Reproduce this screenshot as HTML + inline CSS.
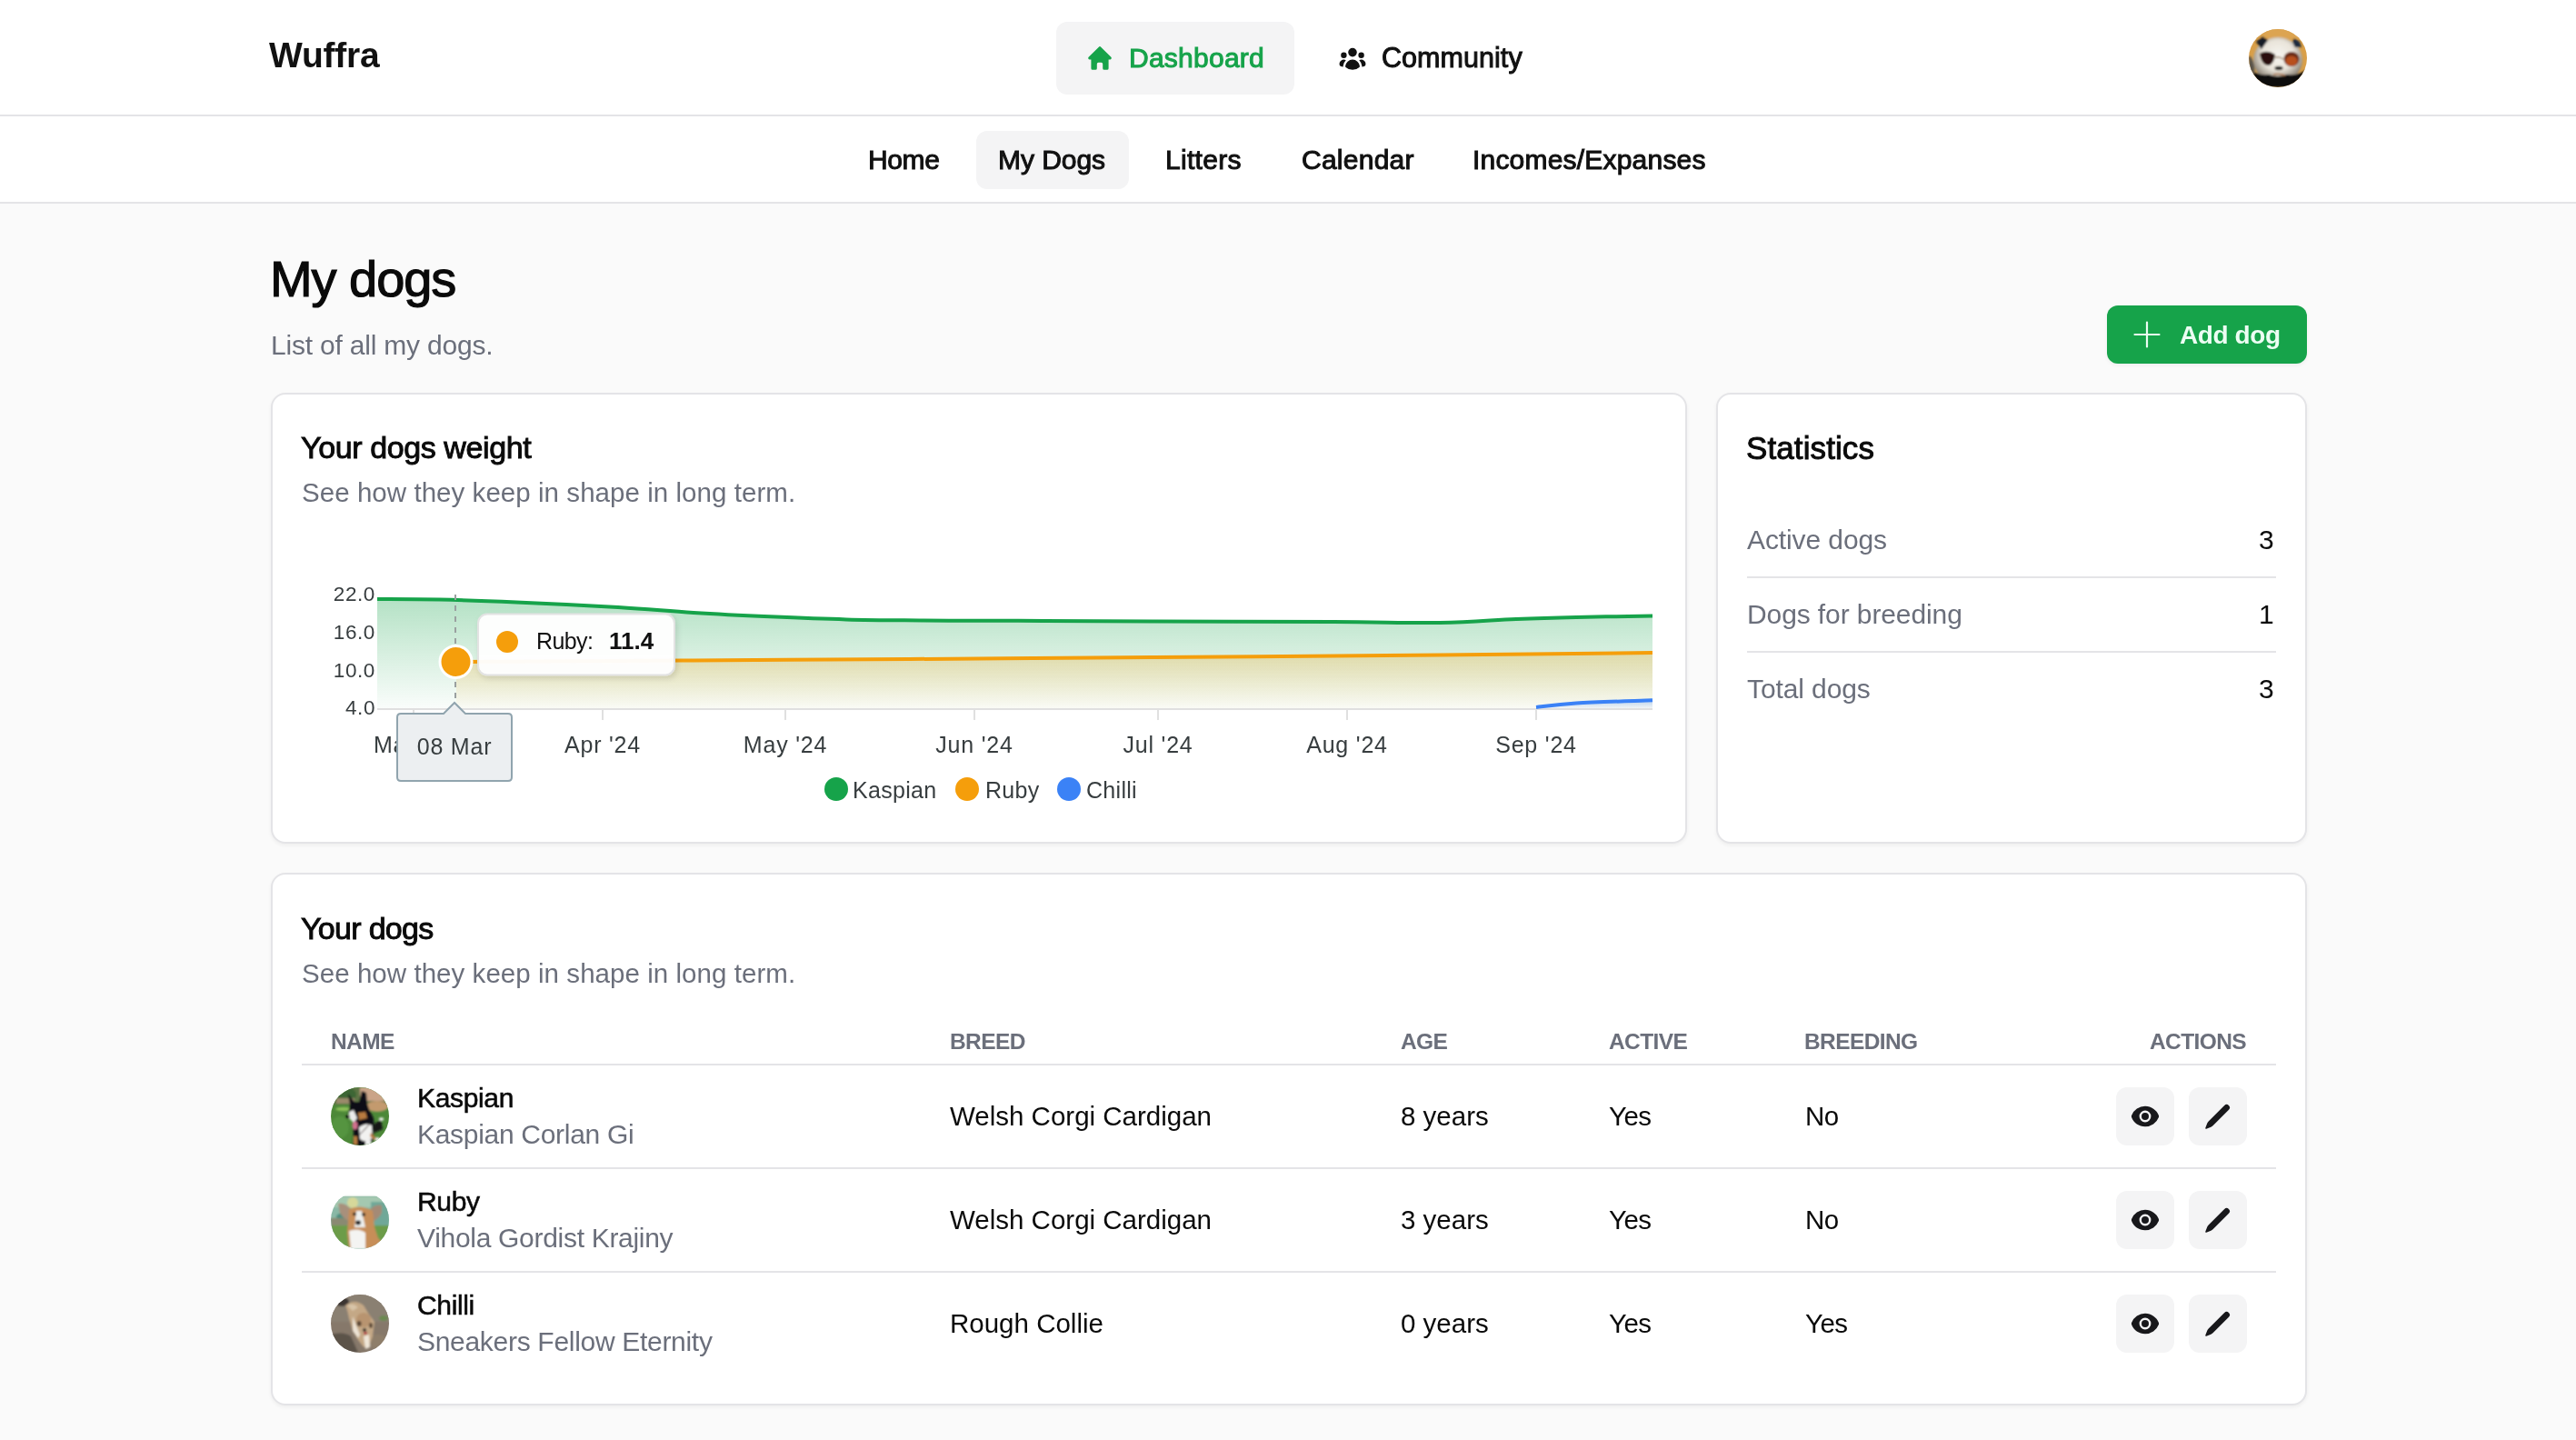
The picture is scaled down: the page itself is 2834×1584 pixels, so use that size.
<!DOCTYPE html>
<html><head><meta charset="utf-8"><title>Wuffra - My dogs</title>
<style>
html,body{margin:0;padding:0;}
body{width:2834px;height:1584px;position:relative;overflow:hidden;background:#fafafa;font-family:"Liberation Sans", sans-serif;}
.t{position:absolute;white-space:nowrap;will-change:transform;}
</style></head><body>
<div style="position:absolute;left:0px;top:0px;width:2834px;height:126px;background:#fff"></div><div style="position:absolute;left:0px;top:126px;width:2834px;height:2px;background:#e4e4e7"></div><div style="position:absolute;left:0px;top:128px;width:2834px;height:94px;background:#fff"></div><div style="position:absolute;left:0px;top:222px;width:2834px;height:2px;background:#e4e4e7"></div><div class="t" style="left:296.0px;top:41.0px;font-size:39px;line-height:39px;font-weight:700;color:#111;letter-spacing:-0.2px;font-family:'Liberation Sans', sans-serif;">Wuffra</div><div style="position:absolute;left:1162px;top:24px;width:262px;height:80px;background:#f4f4f5;border-radius:12px"></div><svg style="position:absolute;left:1194px;top:48px" width="32" height="32" viewBox="0 0 20 20"><path fill="#16a34a" fill-rule="evenodd" clip-rule="evenodd" d="M9.293 2.293a1 1 0 011.414 0l7 7A1 1 0 0117 11h-1v6a1 1 0 01-1 1h-2a1 1 0 01-1-1v-3a1 1 0 00-1-1H9a1 1 0 00-1 1v3a1 1 0 01-1 1H5a1 1 0 01-1-1v-6H3a1 1 0 01-.707-1.707l7-7z"/></svg><div class="t" style="left:1242.0px;top:49.0px;font-size:30px;line-height:30px;font-weight:400;color:#16a34a;letter-spacing:0.25px;font-family:'Liberation Sans', sans-serif;-webkit-text-stroke:1.0px #16a34a;">Dashboard</div><svg style="position:absolute;left:1472px;top:48px" width="32" height="32" viewBox="0 0 20 20"><path fill="#111" d="M10 9a3 3 0 100-6 3 3 0 000 6zM6 8a2 2 0 11-4 0 2 2 0 014 0zM1.49 15.326a.78.78 0 01-.358-.442 3 3 0 014.308-3.516 6.484 6.484 0 00-1.905 3.959c-.023.222-.014.442.025.654a4.970 4.970 0 01-2.070-.655zM16.440 15.980a4.970 4.970 0 002.070-.654.780.780 0 00.357-.442 3 3 0 00-4.308-3.517 6.484 6.484 0 011.907 3.960 2.320 2.320 0 01-.026.654zM18 8a2 2 0 11-4 0 2 2 0 014 0zM5.304 16.190a.844.844 0 01-.277-.710 5 5 0 019.947 0 .843.843 0 01-.277.710A6.975 6.975 0 0110 18a6.974 6.974 0 01-4.696-1.810z"/></svg><div class="t" style="left:1520.0px;top:48.4px;font-size:30.5px;line-height:30.5px;font-weight:400;color:#111;letter-spacing:0.05px;font-family:'Liberation Sans', sans-serif;-webkit-text-stroke:1.0px #111;">Community</div><svg style="position:absolute;left:2474px;top:32px" width="64" height="64" viewBox="0 0 64 64"><defs><clipPath id="cav"><circle cx="32" cy="32" r="32"/></clipPath>
<filter id="bl0" x="-20%" y="-20%" width="140%" height="140%"><feGaussianBlur stdDeviation="1.0"/></filter>
<radialGradient id="pface" cx="0.5" cy="0.4" r="0.55"><stop offset="0" stop-color="#f6f4ef"/><stop offset="0.6" stop-color="#e9e4da"/><stop offset="1" stop-color="#8c8478"/></radialGradient></defs>
<g clip-path="url(#cav)"><rect width="64" height="64" fill="#d99f48"/>
<g filter="url(#bl0)">
<rect x="0" y="0" width="64" height="10" fill="#dca451"/>
<ellipse cx="32" cy="34" rx="27" ry="25" fill="url(#pface)"/>
<path d="M8 14 L15 8 L21 12 L14 22 Z" fill="#141a28"/>
<path d="M50 10 L56 14 L58 20 L51 20 L48 14 Z" fill="#1e2a3e"/>
<path d="M0 44 Q12 52 22 50 Q32 54 42 50 Q54 52 64 44 L64 64 L0 64 Z" fill="#0c0a08"/>
<path d="M2 30 Q8 40 6 50 L0 50 L0 30 Z" fill="#5a544c"/>
<path d="M12 27 Q20 22 29 28 Q28 38 22 40 Q14 40 12 27 Z" fill="#2a100a"/>
<ellipse cx="47" cy="33" rx="8.5" ry="8" fill="#6a2a12"/>
<ellipse cx="47" cy="35" rx="6.5" ry="5.5" fill="#b8501e"/>
<path d="M29 31 Q34 30 38 33" stroke="#6a4a28" stroke-width="1" fill="none"/>
<ellipse cx="33" cy="43" rx="4.5" ry="2.2" fill="#151515"/>
<path d="M27 50 Q33 48 40 51" stroke="#b07a50" stroke-width="1.6" fill="none"/>
</g></g></svg><div style="position:absolute;left:1074px;top:144px;width:168px;height:64px;background:#f4f4f5;border-radius:12px"></div><div class="t" style="left:955.0px;top:160.7px;font-size:30px;line-height:30px;font-weight:400;color:#111;letter-spacing:-0.4px;font-family:'Liberation Sans', sans-serif;-webkit-text-stroke:1.0px #111;">Home</div><div class="t" style="left:1098.0px;top:160.7px;font-size:30px;line-height:30px;font-weight:400;color:#111;letter-spacing:-0.05px;font-family:'Liberation Sans', sans-serif;-webkit-text-stroke:1.0px #111;">My Dogs</div><div class="t" style="left:1282.0px;top:160.7px;font-size:30px;line-height:30px;font-weight:400;color:#111;letter-spacing:0.3px;font-family:'Liberation Sans', sans-serif;-webkit-text-stroke:1.0px #111;">Litters</div><div class="t" style="left:1432.0px;top:160.7px;font-size:30px;line-height:30px;font-weight:400;color:#111;letter-spacing:0.25px;font-family:'Liberation Sans', sans-serif;-webkit-text-stroke:1.0px #111;">Calendar</div><div class="t" style="left:1620.0px;top:160.7px;font-size:30px;line-height:30px;font-weight:400;color:#111;letter-spacing:0.2px;font-family:'Liberation Sans', sans-serif;-webkit-text-stroke:1.0px #111;">Incomes/Expanses</div><div style="position:absolute;left:0px;top:224px;width:2834px;height:1360px;background:#fafafa"></div><div class="t" style="left:297.0px;top:278.6px;font-size:56px;line-height:56px;font-weight:400;color:#0a0a0a;letter-spacing:-1.05px;font-family:'Liberation Sans', sans-serif;-webkit-text-stroke:1.2px #0a0a0a;">My dogs</div><div class="t" style="left:298.0px;top:364.6px;font-size:30px;line-height:30px;font-weight:400;color:#6b6f7b;letter-spacing:-0.2px;font-family:'Liberation Sans', sans-serif;">List of all my dogs.</div><div style="position:absolute;left:2318px;top:336px;width:220px;height:64px;background:#16a34a;border-radius:12px;box-shadow:0 2px 4px rgba(0,0,0,0.05)"></div><svg style="position:absolute;left:2347px;top:353px" width="30" height="30" viewBox="0 0 30 30">
<path d="M15 1.5 V28.5 M1.5 15 H28.5" stroke="#ecfdf3" stroke-width="2.2" stroke-linecap="round"/></svg><div class="t" style="left:2398.0px;top:354.6px;font-size:28px;line-height:28px;font-weight:700;color:#ecfdf3;letter-spacing:-0.4px;font-family:'Liberation Sans', sans-serif;">Add dog</div><div style="position:absolute;left:298px;top:432px;width:1558px;height:496px;background:#fff;border:2px solid #e4e4e7;border-radius:16px;box-shadow:0 2px 4px rgba(0,0,0,0.05);box-sizing:border-box"></div><div style="position:absolute;left:1888px;top:432px;width:650px;height:496px;background:#fff;border:2px solid #e4e4e7;border-radius:16px;box-shadow:0 2px 4px rgba(0,0,0,0.05);box-sizing:border-box"></div><div style="position:absolute;left:298px;top:960px;width:2240px;height:586px;background:#fff;border:2px solid #e4e4e7;border-radius:16px;box-shadow:0 2px 4px rgba(0,0,0,0.05);box-sizing:border-box"></div><div class="t" style="left:331.0px;top:475.2px;font-size:34px;line-height:34px;font-weight:400;color:#0a0a0a;letter-spacing:-0.4px;font-family:'Liberation Sans', sans-serif;-webkit-text-stroke:0.95px #0a0a0a;">Your dogs weight</div><div class="t" style="left:332.0px;top:527.0px;font-size:29.5px;line-height:29.5px;font-weight:400;color:#6b6f7b;letter-spacing:0.05px;font-family:'Liberation Sans', sans-serif;">See how they keep in shape in long term.</div><div class="t" style="left:1921.0px;top:474.8px;font-size:35px;line-height:35px;font-weight:400;color:#0a0a0a;letter-spacing:0.1px;font-family:'Liberation Sans', sans-serif;-webkit-text-stroke:0.95px #0a0a0a;">Statistics</div><div class="t" style="left:1922.0px;top:578.9px;font-size:30px;line-height:30px;font-weight:400;color:#6b6f7b;letter-spacing:-0.1px;font-family:'Liberation Sans', sans-serif;">Active dogs</div><div class="t" style="right:332.0px;top:578.9px;font-size:30px;line-height:30px;font-weight:400;color:#0a0a0a;letter-spacing:0px;font-family:'Liberation Sans', sans-serif;">3</div><div class="t" style="left:1922.0px;top:660.7px;font-size:30px;line-height:30px;font-weight:400;color:#6b6f7b;letter-spacing:-0.1px;font-family:'Liberation Sans', sans-serif;">Dogs for breeding</div><div class="t" style="right:332.0px;top:660.7px;font-size:30px;line-height:30px;font-weight:400;color:#0a0a0a;letter-spacing:0px;font-family:'Liberation Sans', sans-serif;">1</div><div class="t" style="left:1922.0px;top:742.7px;font-size:30px;line-height:30px;font-weight:400;color:#6b6f7b;letter-spacing:-0.1px;font-family:'Liberation Sans', sans-serif;">Total dogs</div><div class="t" style="right:332.0px;top:742.7px;font-size:30px;line-height:30px;font-weight:400;color:#0a0a0a;letter-spacing:0px;font-family:'Liberation Sans', sans-serif;">3</div><div style="position:absolute;left:1922px;top:634px;width:582px;height:2px;background:#e4e4e7"></div><div style="position:absolute;left:1922px;top:716px;width:582px;height:2px;background:#e4e4e7"></div><div class="t" style="left:331.0px;top:1003.8px;font-size:34px;line-height:34px;font-weight:400;color:#0a0a0a;letter-spacing:-0.7px;font-family:'Liberation Sans', sans-serif;-webkit-text-stroke:0.95px #0a0a0a;">Your dogs</div><div class="t" style="left:332.0px;top:1056.4px;font-size:29.5px;line-height:29.5px;font-weight:400;color:#6b6f7b;letter-spacing:0.05px;font-family:'Liberation Sans', sans-serif;">See how they keep in shape in long term.</div><div class="t" style="left:364.0px;top:1133.6px;font-size:24.5px;line-height:24.5px;font-weight:700;color:#6b6f7b;letter-spacing:-0.6px;font-family:'Liberation Sans', sans-serif;">NAME</div><div class="t" style="left:1045.0px;top:1133.6px;font-size:24.5px;line-height:24.5px;font-weight:700;color:#6b6f7b;letter-spacing:-0.6px;font-family:'Liberation Sans', sans-serif;">BREED</div><div class="t" style="left:1541.0px;top:1133.6px;font-size:24.5px;line-height:24.5px;font-weight:700;color:#6b6f7b;letter-spacing:-0.6px;font-family:'Liberation Sans', sans-serif;">AGE</div><div class="t" style="left:1770.0px;top:1133.6px;font-size:24.5px;line-height:24.5px;font-weight:700;color:#6b6f7b;letter-spacing:-0.6px;font-family:'Liberation Sans', sans-serif;">ACTIVE</div><div class="t" style="left:1985.0px;top:1133.6px;font-size:24.5px;line-height:24.5px;font-weight:700;color:#6b6f7b;letter-spacing:-0.6px;font-family:'Liberation Sans', sans-serif;">BREEDING</div><div class="t" style="right:363.0px;top:1133.6px;font-size:24.5px;line-height:24.5px;font-weight:700;color:#6b6f7b;letter-spacing:-0.6px;font-family:'Liberation Sans', sans-serif;">ACTIONS</div><div style="position:absolute;left:332px;top:1170px;width:2172px;height:2px;background:#e4e4e7"></div><div style="position:absolute;left:332px;top:1284px;width:2172px;height:2px;background:#e4e4e7"></div><div style="position:absolute;left:332px;top:1398px;width:2172px;height:2px;background:#e4e4e7"></div><svg style="position:absolute;left:364px;top:1196px" width="64" height="64" viewBox="0 0 64 64"><defs><clipPath id="ca1"><circle cx="32" cy="32" r="32"/></clipPath>
<filter id="bl1" x="-20%" y="-20%" width="140%" height="140%"><feGaussianBlur stdDeviation="1.0"/></filter></defs>
<g clip-path="url(#ca1)"><rect width="64" height="64" fill="#4c8838"/>
<g filter="url(#bl1)">
<rect x="0" y="0" width="64" height="19" fill="#5d7444"/>
<ellipse cx="14" cy="8" rx="14" ry="9" fill="#3e6634"/>
<rect x="32" y="0" width="32" height="15" fill="#caa488"/>
<rect x="6" y="12" width="20" height="6" fill="#9a8a6a"/>
<ellipse cx="51" cy="21" rx="12" ry="6" fill="#c39a6e"/>
<ellipse cx="14" cy="24" rx="9" ry="2.2" fill="#8cc058"/>
<ellipse cx="10" cy="44" rx="10" ry="12" fill="#559440"/>
<path d="M19 7 L26 16 L31 16 L34 4 L39 6 L40 18 L42 24 L40 34 L30 34 L21 34 L19 28 L21 20 Z" fill="#101018"/>
<path d="M28 33 L42 24 L47 34 L48 46 L46 60 L40 64 L24 64 L25 50 L24 42 Z" fill="#101018"/>
<path d="M48 40 L55 36 L57 46 L48 50 Z" fill="#121218"/>
<ellipse cx="55.5" cy="35" rx="2.8" ry="1.8" fill="#f2f2f2"/>
<path d="M20 27 L25 25 L29 34 L25 39 L20 34 Z" fill="#ececec"/>
<ellipse cx="18.5" cy="32.5" rx="2.3" ry="1.8" fill="#050505"/>
<path d="M30 28 L38 27 L40 34 L31 36 Z" fill="#b87a40"/>
<ellipse cx="26.5" cy="42" rx="3" ry="4.5" fill="#d0708e"/>
<path d="M31 44 Q39 38 45 42 L46 56 Q38 62 32 57 Z" fill="#f2f2f0"/>
<path d="M32 52 L43 40" stroke="#3a2a2a" stroke-width="1"/>
<rect x="25" y="54" width="4" height="9" fill="#b87a40"/>
<rect x="38" y="58" width="6" height="6" fill="#f0f0f0"/>
<ellipse cx="51" cy="57" rx="3" ry="2" fill="#eeeeee"/>
<path d="M44 50 L50 56 L48 58 L43 54 Z" fill="#b87a40"/>
</g></g></svg><div class="t" style="left:459.0px;top:1192.7px;font-size:30px;line-height:30px;font-weight:400;color:#0a0a0a;letter-spacing:-0.35px;font-family:'Liberation Sans', sans-serif;-webkit-text-stroke:0.55px #0a0a0a;">Kaspian</div><div class="t" style="left:459.0px;top:1232.5px;font-size:30px;line-height:30px;font-weight:400;color:#6b6f7b;letter-spacing:-0.3px;font-family:'Liberation Sans', sans-serif;">Kaspian Corlan Gi</div><div class="t" style="left:1045.0px;top:1213.0px;font-size:29.5px;line-height:29.5px;font-weight:400;color:#0a0a0a;letter-spacing:0px;font-family:'Liberation Sans', sans-serif;">Welsh Corgi Cardigan</div><div class="t" style="left:1541.0px;top:1213.0px;font-size:29.5px;line-height:29.5px;font-weight:400;color:#0a0a0a;letter-spacing:0px;font-family:'Liberation Sans', sans-serif;">8 years</div><div class="t" style="left:1770.0px;top:1213.0px;font-size:29.5px;line-height:29.5px;font-weight:400;color:#0a0a0a;letter-spacing:-0.5px;font-family:'Liberation Sans', sans-serif;">Yes</div><div class="t" style="left:1986.0px;top:1213.0px;font-size:29.5px;line-height:29.5px;font-weight:400;color:#0a0a0a;letter-spacing:-0.5px;font-family:'Liberation Sans', sans-serif;">No</div><div style="position:absolute;left:2328px;top:1196px;width:64px;height:64px;background:#f4f4f5;border-radius:12px"></div><div style="position:absolute;left:2408px;top:1196px;width:64px;height:64px;background:#f4f4f5;border-radius:12px"></div><svg style="position:absolute;left:2344px;top:1212px" width="32" height="32" viewBox="0 0 20 20"><path fill="#18181b" d="M10 12.5a2.5 2.5 0 100-5 2.5 2.5 0 000 5z"/><path fill="#18181b" fill-rule="evenodd" clip-rule="evenodd" d="M.664 10.590a1.651 1.651 0 010-1.186A10.004 10.004 0 0110 3c4.257 0 7.893 2.660 9.336 6.410.147.381.146.804 0 1.186A10.004 10.004 0 0110 17c-4.257 0-7.893-2.660-9.336-6.410zM14 10a4 4 0 11-8 0 4 4 0 018 0z"/></svg><svg style="position:absolute;left:2424px;top:1212px" width="32" height="32" viewBox="0 0 20 20"><path fill="#18181b" d="M2.695 14.763l-1.262 3.154a.5.5 0 00.650.650l3.155-1.262a4 4 0 001.343-.885L17.500 5.500a2.121 2.121 0 00-3-3L3.580 13.420a4 4 0 00-.885 1.343z"/></svg><svg style="position:absolute;left:364px;top:1310px" width="64" height="64" viewBox="0 0 64 64"><defs><clipPath id="ca2"><circle cx="32" cy="32" r="32"/></clipPath>
<filter id="bl2" x="-20%" y="-20%" width="140%" height="140%"><feGaussianBlur stdDeviation="1.0"/></filter></defs>
<g clip-path="url(#ca2)"><rect width="64" height="64" fill="#ffffff"/>
<rect x="0" y="6" width="64" height="58" fill="#8ab8a6"/>
<g filter="url(#bl2)">
<rect x="0" y="6" width="64" height="12" fill="#a4c8b0"/>
<ellipse cx="24" cy="13" rx="6" ry="6" fill="#d6d89a"/>
<rect x="44" y="12" width="20" height="30" fill="#6fa898"/>
<path d="M6 28 Q10 22 16 26 L20 38 L8 38 Z" fill="#4e8e80"/>
<rect x="0" y="30" width="20" height="10" fill="#8a8a72"/>
<rect x="0" y="38" width="64" height="26" fill="#6c9c4a"/>
<path d="M8 14 Q16 12 24 22 L24 34 Q14 32 10 24 Z" fill="#a8907c"/>
<path d="M56 16 Q48 14 42 22 L42 36 Q52 32 56 24 Z" fill="#a48a76"/>
<path d="M20 20 Q33 14 46 22 L48 40 L52 52 L60 60 L60 64 L20 64 L18 46 Z" fill="#c78e58"/>
<path d="M28 22 L34 22 L38 40 L26 40 Z" fill="#eef0ee"/>
<path d="M20 44 Q30 40 38 46 L38 64 L22 64 Z" fill="#f4f4f2"/>
<ellipse cx="26" cy="25.5" rx="2" ry="1.8" fill="#121212"/>
<ellipse cx="36" cy="26" rx="2" ry="1.8" fill="#121212"/>
<ellipse cx="30" cy="35" rx="3" ry="2.4" fill="#0c0c10"/>
</g></g></svg><div class="t" style="left:459.0px;top:1306.7px;font-size:30px;line-height:30px;font-weight:400;color:#0a0a0a;letter-spacing:-0.35px;font-family:'Liberation Sans', sans-serif;-webkit-text-stroke:0.55px #0a0a0a;">Ruby</div><div class="t" style="left:459.0px;top:1346.5px;font-size:30px;line-height:30px;font-weight:400;color:#6b6f7b;letter-spacing:-0.3px;font-family:'Liberation Sans', sans-serif;">Vihola Gordist Krajiny</div><div class="t" style="left:1045.0px;top:1327.0px;font-size:29.5px;line-height:29.5px;font-weight:400;color:#0a0a0a;letter-spacing:0px;font-family:'Liberation Sans', sans-serif;">Welsh Corgi Cardigan</div><div class="t" style="left:1541.0px;top:1327.0px;font-size:29.5px;line-height:29.5px;font-weight:400;color:#0a0a0a;letter-spacing:0px;font-family:'Liberation Sans', sans-serif;">3 years</div><div class="t" style="left:1770.0px;top:1327.0px;font-size:29.5px;line-height:29.5px;font-weight:400;color:#0a0a0a;letter-spacing:-0.5px;font-family:'Liberation Sans', sans-serif;">Yes</div><div class="t" style="left:1986.0px;top:1327.0px;font-size:29.5px;line-height:29.5px;font-weight:400;color:#0a0a0a;letter-spacing:-0.5px;font-family:'Liberation Sans', sans-serif;">No</div><div style="position:absolute;left:2328px;top:1310px;width:64px;height:64px;background:#f4f4f5;border-radius:12px"></div><div style="position:absolute;left:2408px;top:1310px;width:64px;height:64px;background:#f4f4f5;border-radius:12px"></div><svg style="position:absolute;left:2344px;top:1326px" width="32" height="32" viewBox="0 0 20 20"><path fill="#18181b" d="M10 12.5a2.5 2.5 0 100-5 2.5 2.5 0 000 5z"/><path fill="#18181b" fill-rule="evenodd" clip-rule="evenodd" d="M.664 10.590a1.651 1.651 0 010-1.186A10.004 10.004 0 0110 3c4.257 0 7.893 2.660 9.336 6.410.147.381.146.804 0 1.186A10.004 10.004 0 0110 17c-4.257 0-7.893-2.660-9.336-6.410zM14 10a4 4 0 11-8 0 4 4 0 018 0z"/></svg><svg style="position:absolute;left:2424px;top:1326px" width="32" height="32" viewBox="0 0 20 20"><path fill="#18181b" d="M2.695 14.763l-1.262 3.154a.5.5 0 00.650.650l3.155-1.262a4 4 0 001.343-.885L17.500 5.500a2.121 2.121 0 00-3-3L3.580 13.420a4 4 0 00-.885 1.343z"/></svg><svg style="position:absolute;left:364px;top:1424px" width="64" height="64" viewBox="0 0 64 64"><defs><clipPath id="ca3"><circle cx="32" cy="32" r="32"/></clipPath>
<filter id="bl3" x="-20%" y="-20%" width="140%" height="140%"><feGaussianBlur stdDeviation="1.0"/></filter></defs>
<g clip-path="url(#ca3)"><rect width="64" height="64" fill="#86786a"/>
<g filter="url(#bl3)">
<rect x="0" y="0" width="64" height="30" fill="#8a8072"/>
<path d="M0 44 Q14 40 22 46 L30 64 L0 64 Z" fill="#5c524a"/>
<ellipse cx="52" cy="52" rx="10" ry="8" fill="#8e7e6a"/>
<ellipse cx="58" cy="26" rx="5" ry="3" fill="#6a8a50"/>
<ellipse cx="12" cy="8" rx="8" ry="5" fill="#3a3432"/>
<path d="M16 12 Q26 4 36 12 L42 22 L48 30 L46 46 L42 56 L36 58 L30 50 L24 40 L20 26 Q18 16 16 12 Z" fill="#c4a886"/>
<path d="M18 12 Q24 8 30 14 L24 18 Z" fill="#d8c4a8"/>
<ellipse cx="36" cy="28" rx="8" ry="8" fill="#b89470"/>
<path d="M24 24 Q28 34 32 44 L30 48 L24 40 Z" fill="#ece2d4"/>
<path d="M36 46 L42 44 L43 58 L38 60 Z" fill="#efe6d8"/>
<ellipse cx="31" cy="32" rx="2.5" ry="3" fill="#5a4636"/>
<ellipse cx="44" cy="34" rx="2" ry="3" fill="#5a4636"/>
<ellipse cx="37" cy="39" rx="2" ry="1.8" fill="#111"/>
<ellipse cx="38" cy="42.5" rx="2" ry="1.5" fill="#b03040"/>
</g></g></svg><div class="t" style="left:459.0px;top:1420.7px;font-size:30px;line-height:30px;font-weight:400;color:#0a0a0a;letter-spacing:-0.35px;font-family:'Liberation Sans', sans-serif;-webkit-text-stroke:0.55px #0a0a0a;">Chilli</div><div class="t" style="left:459.0px;top:1460.5px;font-size:30px;line-height:30px;font-weight:400;color:#6b6f7b;letter-spacing:-0.3px;font-family:'Liberation Sans', sans-serif;">Sneakers Fellow Eternity</div><div class="t" style="left:1045.0px;top:1441.0px;font-size:29.5px;line-height:29.5px;font-weight:400;color:#0a0a0a;letter-spacing:0px;font-family:'Liberation Sans', sans-serif;">Rough Collie</div><div class="t" style="left:1541.0px;top:1441.0px;font-size:29.5px;line-height:29.5px;font-weight:400;color:#0a0a0a;letter-spacing:0px;font-family:'Liberation Sans', sans-serif;">0 years</div><div class="t" style="left:1770.0px;top:1441.0px;font-size:29.5px;line-height:29.5px;font-weight:400;color:#0a0a0a;letter-spacing:-0.5px;font-family:'Liberation Sans', sans-serif;">Yes</div><div class="t" style="left:1986.0px;top:1441.0px;font-size:29.5px;line-height:29.5px;font-weight:400;color:#0a0a0a;letter-spacing:-0.5px;font-family:'Liberation Sans', sans-serif;">Yes</div><div style="position:absolute;left:2328px;top:1424px;width:64px;height:64px;background:#f4f4f5;border-radius:12px"></div><div style="position:absolute;left:2408px;top:1424px;width:64px;height:64px;background:#f4f4f5;border-radius:12px"></div><svg style="position:absolute;left:2344px;top:1440px" width="32" height="32" viewBox="0 0 20 20"><path fill="#18181b" d="M10 12.5a2.5 2.5 0 100-5 2.5 2.5 0 000 5z"/><path fill="#18181b" fill-rule="evenodd" clip-rule="evenodd" d="M.664 10.590a1.651 1.651 0 010-1.186A10.004 10.004 0 0110 3c4.257 0 7.893 2.660 9.336 6.410.147.381.146.804 0 1.186A10.004 10.004 0 0110 17c-4.257 0-7.893-2.660-9.336-6.410zM14 10a4 4 0 11-8 0 4 4 0 018 0z"/></svg><svg style="position:absolute;left:2424px;top:1440px" width="32" height="32" viewBox="0 0 20 20"><path fill="#18181b" d="M2.695 14.763l-1.262 3.154a.5.5 0 00.650.650l3.155-1.262a4 4 0 001.343-.885L17.500 5.500a2.121 2.121 0 00-3-3L3.580 13.420a4 4 0 00-.885 1.343z"/></svg><svg style="position:absolute;left:0;top:0" width="2834" height="1584" viewBox="0 0 2834 1584"><defs>
<linearGradient id="gg" x1="0" y1="0" x2="0" y2="1"><stop offset="0" stop-color="#16a34a" stop-opacity="0.32"/><stop offset="1" stop-color="#16a34a" stop-opacity="0.02"/></linearGradient>
<linearGradient id="og" x1="0" y1="0" x2="0" y2="1"><stop offset="0" stop-color="#f59e0b" stop-opacity="0.26"/><stop offset="1" stop-color="#f59e0b" stop-opacity="0.02"/></linearGradient>
<linearGradient id="bg" x1="0" y1="0" x2="0" y2="1"><stop offset="0" stop-color="#3b82f6" stop-opacity="0.3"/><stop offset="1" stop-color="#3b82f6" stop-opacity="0.02"/></linearGradient>
<filter id="tsh" x="-10%" y="-10%" width="130%" height="140%"><feDropShadow dx="2" dy="3" stdDeviation="3" flood-color="#000" flood-opacity="0.12"/></filter>
</defs><path d="M415.0,659.0 C427.4,659.1 456.5,659.0 484.0,659.6 C511.5,660.2 532.7,660.9 568.0,662.4 C603.3,663.9 644.9,665.9 680.0,668.0 C715.1,670.1 732.9,672.1 763.0,674.0 C793.1,675.9 816.8,677.0 847.0,678.3 C877.2,679.6 900.8,680.6 931.0,681.4 C961.2,682.2 981.0,682.2 1015.0,682.5 C1049.0,682.8 1074.6,682.6 1120.0,682.8 C1165.4,683.0 1204.5,683.3 1267.0,683.5 C1329.5,683.7 1409.9,683.7 1467.0,684.0 C1524.1,684.3 1547.8,685.5 1584.0,685.0 C1620.2,684.5 1641.0,682.1 1668.0,681.0 C1695.0,679.9 1707.0,679.6 1734.0,679.0 C1761.0,678.4 1802.9,677.8 1818.0,677.5 L1818,780 L415,780 Z" fill="url(#gg)"/><path d="M502.0,728.0 C546.6,727.7 660.4,727.0 750.0,726.5 C839.6,726.0 906.9,725.6 1000.0,725.0 C1093.1,724.4 1161.9,723.8 1267.0,723.0 C1372.1,722.2 1484.8,721.4 1584.0,720.5 C1683.2,719.6 1775.9,718.5 1818.0,718.0 L1818,780 L502,780 Z" fill="url(#og)"/><path d="M1690.0,778.0 C1697.9,777.2 1711.0,774.9 1734.0,773.5 C1757.0,772.1 1802.9,770.9 1818.0,770.3 L1818,780 L1690,780 Z" fill="url(#bg)"/><rect x="415" y="779" width="1403" height="2" fill="#e0e0e0"/><rect x="454" y="780" width="2" height="12" fill="#e0e0e0"/><rect x="662" y="780" width="2" height="12" fill="#e0e0e0"/><rect x="863" y="780" width="2" height="12" fill="#e0e0e0"/><rect x="1071" y="780" width="2" height="12" fill="#e0e0e0"/><rect x="1273" y="780" width="2" height="12" fill="#e0e0e0"/><rect x="1481" y="780" width="2" height="12" fill="#e0e0e0"/><rect x="1689" y="780" width="2" height="12" fill="#e0e0e0"/><path d="M415.0,659.0 C427.4,659.1 456.5,659.0 484.0,659.6 C511.5,660.2 532.7,660.9 568.0,662.4 C603.3,663.9 644.9,665.9 680.0,668.0 C715.1,670.1 732.9,672.1 763.0,674.0 C793.1,675.9 816.8,677.0 847.0,678.3 C877.2,679.6 900.8,680.6 931.0,681.4 C961.2,682.2 981.0,682.2 1015.0,682.5 C1049.0,682.8 1074.6,682.6 1120.0,682.8 C1165.4,683.0 1204.5,683.3 1267.0,683.5 C1329.5,683.7 1409.9,683.7 1467.0,684.0 C1524.1,684.3 1547.8,685.5 1584.0,685.0 C1620.2,684.5 1641.0,682.1 1668.0,681.0 C1695.0,679.9 1707.0,679.6 1734.0,679.0 C1761.0,678.4 1802.9,677.8 1818.0,677.5" fill="none" stroke="#16a34a" stroke-width="4" stroke-linecap="butt"/><path d="M502.0,728.0 C546.6,727.7 660.4,727.0 750.0,726.5 C839.6,726.0 906.9,725.6 1000.0,725.0 C1093.1,724.4 1161.9,723.8 1267.0,723.0 C1372.1,722.2 1484.8,721.4 1584.0,720.5 C1683.2,719.6 1775.9,718.5 1818.0,718.0" fill="none" stroke="#f59e0b" stroke-width="4"/><path d="M1690.0,778.0 C1697.9,777.2 1711.0,774.9 1734.0,773.5 C1757.0,772.1 1802.9,770.9 1818.0,770.3" fill="none" stroke="#3b82f6" stroke-width="4"/><line x1="501" y1="654" x2="501" y2="770" stroke="#9aa0a0" stroke-width="2" stroke-dasharray="6,6"/><text x="413" y="661" text-anchor="end" font-family="Liberation Sans, sans-serif" font-size="22.5" fill="#373d3f" letter-spacing="0.6">22.0</text><text x="413" y="702.6" text-anchor="end" font-family="Liberation Sans, sans-serif" font-size="22.5" fill="#373d3f" letter-spacing="0.6">16.0</text><text x="413" y="744.5" text-anchor="end" font-family="Liberation Sans, sans-serif" font-size="22.5" fill="#373d3f" letter-spacing="0.6">10.0</text><text x="413" y="786.4" text-anchor="end" font-family="Liberation Sans, sans-serif" font-size="22.5" fill="#373d3f" letter-spacing="0.6">4.0</text><text x="455" y="828.3" text-anchor="middle" font-family="Liberation Sans, sans-serif" font-size="25" fill="#373d3f" letter-spacing="0.8">Mar '24</text><text x="663" y="828.3" text-anchor="middle" font-family="Liberation Sans, sans-serif" font-size="25" fill="#373d3f" letter-spacing="0.8">Apr '24</text><text x="864" y="828.3" text-anchor="middle" font-family="Liberation Sans, sans-serif" font-size="25" fill="#373d3f" letter-spacing="0.8">May '24</text><text x="1072" y="828.3" text-anchor="middle" font-family="Liberation Sans, sans-serif" font-size="25" fill="#373d3f" letter-spacing="0.8">Jun '24</text><text x="1274" y="828.3" text-anchor="middle" font-family="Liberation Sans, sans-serif" font-size="25" fill="#373d3f" letter-spacing="0.8">Jul '24</text><text x="1482" y="828.3" text-anchor="middle" font-family="Liberation Sans, sans-serif" font-size="25" fill="#373d3f" letter-spacing="0.8">Aug '24</text><text x="1690" y="828.3" text-anchor="middle" font-family="Liberation Sans, sans-serif" font-size="25" fill="#373d3f" letter-spacing="0.8">Sep '24</text><circle cx="501.5" cy="728" r="17.5" fill="#f59e0b" stroke="#fff" stroke-width="3"/><rect x="526" y="675.5" width="216" height="67" rx="10" fill="rgba(255,255,255,0.96)" stroke="#e3e3e3" stroke-width="2" filter="url(#tsh)"/><circle cx="558" cy="706" r="12" fill="#f59e0b"/><text x="590" y="714.3" font-family="Liberation Sans, sans-serif" font-size="25" fill="#111" letter-spacing="-0.6">Ruby:</text><text x="670" y="714.3" font-family="Liberation Sans, sans-serif" font-size="26" font-weight="700" fill="#111" letter-spacing="0">11.4</text><path d="M441,785 L488,785 L500,773 L512,785 L559,785 Q563,785 563,789 L563,855 Q563,859 559,859 L441,859 Q437,859 437,855 L437,789 Q437,785 441,785 Z" fill="#eceff1" stroke="#90a4ae" stroke-width="2"/><text x="500" y="829.7" text-anchor="middle" font-family="Liberation Sans, sans-serif" font-size="25" fill="#373d3f" letter-spacing="0.8">08 Mar</text><circle cx="920" cy="868" r="13" fill="#16a34a"/><text x="938" y="878" font-family="Liberation Sans, sans-serif" font-size="25" fill="#373d3f" letter-spacing="0.3">Kaspian</text><circle cx="1064" cy="868" r="13" fill="#f59e0b"/><text x="1084" y="878" font-family="Liberation Sans, sans-serif" font-size="25" fill="#373d3f" letter-spacing="0.3">Ruby</text><circle cx="1176" cy="868" r="13" fill="#3b82f6"/><text x="1195" y="878" font-family="Liberation Sans, sans-serif" font-size="25" fill="#373d3f" letter-spacing="0.3">Chilli</text></svg>
<script>(function(){var w=window.innerWidth||2834;if(Math.abs(w-2834)>2){document.documentElement.style.zoom=(w/2834);}})();</script>
</body></html>
